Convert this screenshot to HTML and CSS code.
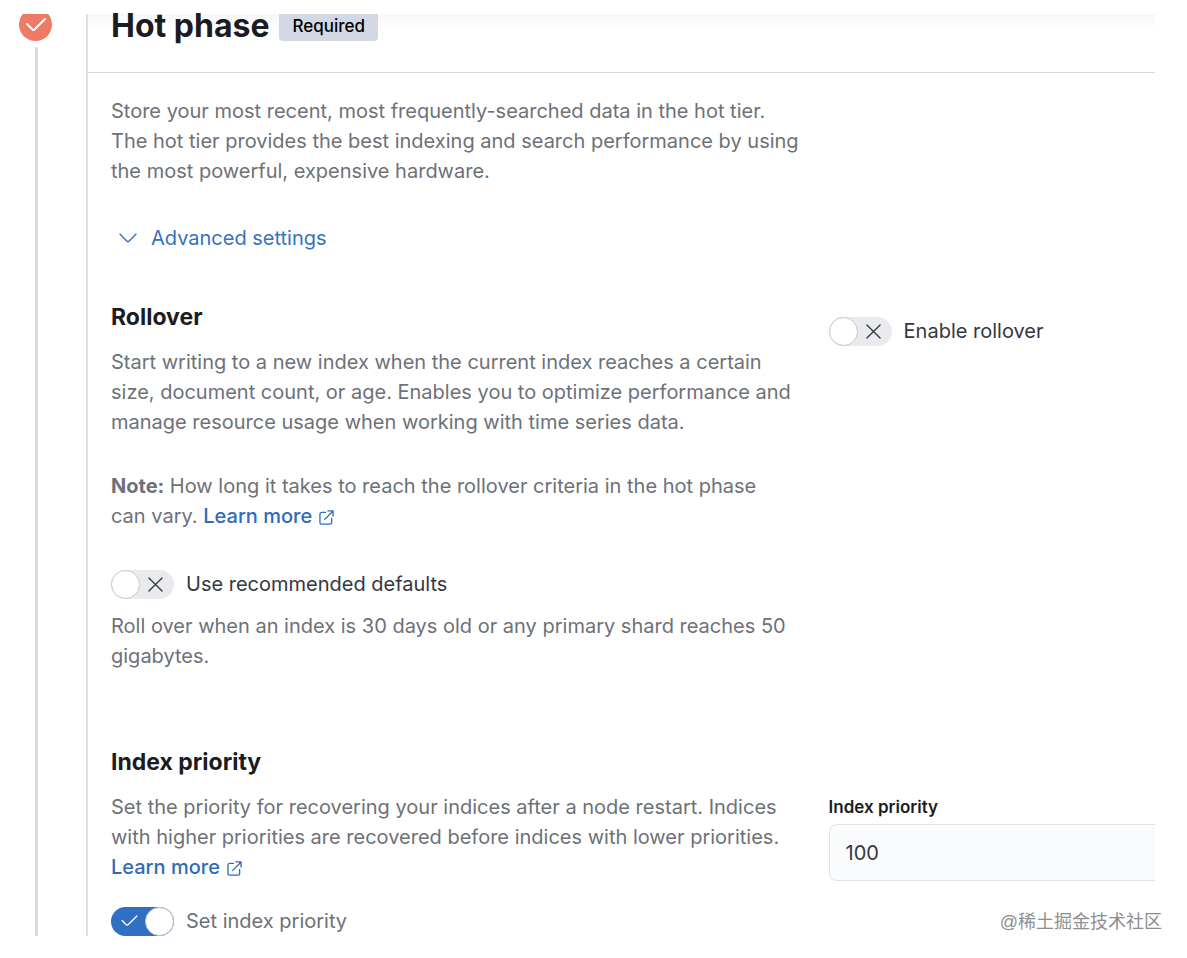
FILE: index.html
```html
<!DOCTYPE html>
<html lang="en">
<head>
    <meta charset="UTF-8">
    <meta name="viewport" content="width=device-width, initial-scale=1.0">
    <title>Hot phase</title>
    <link rel="stylesheet" href="styles.css">
</head>
<body>
    <main class="phase">
        <div class="timeline">
            <div class="timeline-icon">
                <svg width="20" height="14" viewBox="0 0 20 14"><path d="M1 6l5.500 5.500q1 1 2 0L19 1"/></svg>
            </div>
            <div class="timeline-line"></div>
        </div>

        <section class="panel">
            <header class="panel-header">
                <h1>Hot phase</h1>
                <span class="badge">Required</span>
            </header>

            <div class="panel-body">
                <p class="intro">Store your most recent, most frequently-searched data in the hot tier. The hot tier provides the best indexing and search performance by using the most powerful, expensive hardware.</p>

                <button type="button" class="advanced-button">
                    <svg width="18" height="10" viewBox="0 0 18 10"><path d="M1 1l6.800 7q1.200 1.200 2.400 0L17 1"/></svg>
                    Advanced settings
                </button>

                <div class="row">
                    <div class="description">
                        <h2>Rollover</h2>
                        <p>Start writing to a new index when the current index reaches a certain size, document count, or age. Enables you to optimize performance and manage resource usage when working with time series data.</p>
                        <p class="note"><strong>Note:</strong> How long it takes to reach the rollover criteria in the hot phase can vary. <a href="#">Learn more<svg class="external" width="15" height="15" viewBox="0 0 16 16"><path d="M7 2.500H3a2 2 0 0 0-2 2V13a2 2 0 0 0 2 2h8.500a2 2 0 0 0 2-2V9M9.500 1H15v5.500M15 1L6 10"/></svg></a></p>
                        <label class="switch">
                            <input type="checkbox" role="switch">
                            <span class="track">
                                <svg class="cross" width="15" height="15" viewBox="0 0 16 16"><path d="M1 1l14 14M15 1L1 15"/></svg>
                                <span class="thumb"></span>
                            </span>
                            Use recommended defaults
                        </label>
                        <p class="help">Roll over when an index is 30 days old or any primary shard reaches 50 gigabytes.</p>
                    </div>
                    <div class="fields fields-rollover">
                        <label class="switch">
                            <input type="checkbox" role="switch">
                            <span class="track">
                                <svg class="cross" width="15" height="15" viewBox="0 0 16 16"><path d="M1 1l14 14M15 1L1 15"/></svg>
                                <span class="thumb"></span>
                            </span>
                            Enable rollover
                        </label>
                    </div>
                </div>

                <div class="row row-priority">
                    <div class="description">
                        <h2>Index priority</h2>
                        <p>Set the priority for recovering your indices after a node restart. Indices with higher priorities are recovered before indices with lower priorities. <a href="#">Learn more<svg class="external" width="15" height="15" viewBox="0 0 16 16"><path d="M7 2.500H3a2 2 0 0 0-2 2V13a2 2 0 0 0 2 2h8.500a2 2 0 0 0 2-2V9M9.500 1H15v5.500M15 1L6 10"/></svg></a></p>
                        <label class="switch switch-muted">
                            <input type="checkbox" role="switch" checked>
                            <span class="track">
                                <span class="thumb"></span>
                                <svg class="tick" width="17" height="12" viewBox="0 0 18 13"><path d="M1 6l4.500 4.500q1 1 2 0L17 1"/></svg>
                            </span>
                            Set index priority
                        </label>
                    </div>
                    <div class="fields fields-priority">
                        <label class="field-label" for="index-priority">Index priority</label>
                        <input type="text" id="index-priority" class="field-input" value="100" inputmode="numeric">
                    </div>
                </div>
            </div>
        </section>

        <span class="watermark">@稀土掘金技术社区</span>
    </main>
</body>
</html>
```

FILE: styles.css
```css
* {
    box-sizing: border-box;
}
body {
    font-family: Inter, "Liberation Sans", sans-serif;
    font-size: 20px;
    line-height: 30px;
    color: #6d7178;
    background-color: #ffffff;
    margin: 0;
    padding: 14px 32px 22px 19px;
}
h1, h2, p {
    margin: 0;
}
svg {
    fill: none;
    stroke: currentColor;
    stroke-width: 1.4;
    stroke-linecap: round;
    stroke-linejoin: round;
}
.phase {
    position: relative;
    display: flex;
}
.timeline {
    width: 67px;
    flex-shrink: 0;
    display: flex;
    flex-direction: column;
    overflow: hidden;
}
.timeline-icon {
    width: 33px;
    height: 33px;
    margin-top: -6px;
    flex-shrink: 0;
    display: flex;
    align-items: center;
    justify-content: center;
    color: #ffffff;
    background-color: #ee7b64;
    border-radius: 50%;
}
.timeline-icon svg {
    stroke-width: 2;
}
.timeline-line {
    flex: 1;
    width: 3px;
    margin: 6px 0 0 16px;
    background-color: #d8dae6;
}
.panel {
    flex: 1;
    min-width: 0;
    border-left: 2px solid #dfe1e8;
}
.panel-header {
    display: flex;
    align-items: flex-start;
    gap: 10px;
    padding: 0 0 31px 23px;
    border-bottom: 1px solid #d3d7de;
    background-image: linear-gradient(#f7f7f8, #ffffff 16px);
}
h1 {
    font-size: 32px;
    line-height: 24px;
    font-weight: 700;
    color: #1a1c21;
}
.badge {
    padding: 0 13px 3px;
    font-size: 17px;
    line-height: 24px;
    font-weight: 500;
    color: #000000;
    background-color: #d3d9e4;
    border-radius: 0 0 4px 4px;
}
.panel-body {
    padding: 23px 0 0 23px;
}
.intro {
    max-width: 694px;
}
.advanced-button {
    display: flex;
    align-items: center;
    gap: 14px;
    margin: 37px 0 49px;
    padding: 0 8px;
    font: inherit;
    color: #3572c0;
    background: none;
    border: 0;
    cursor: pointer;
}
.row {
    display: grid;
    grid-template-columns: 17fr 8fr;
    gap: 24px;
}
.row-priority {
    margin-top: 76px;
}
.description {
    padding-right: 12px;
}
h2 {
    margin-bottom: 15px;
    font-size: 23px;
    line-height: 30px;
    font-weight: 700;
    color: #1a1c21;
}
.note {
    margin-top: 34px;
}
a {
    font-weight: 500;
    color: #2f6bb8;
    text-decoration: none;
}
a:hover {
    text-decoration: underline;
}
.external {
    margin-left: 7px;
    vertical-align: -2px;
}
.switch {
    position: relative;
    display: flex;
    align-items: center;
    gap: 12px;
    color: #343741;
    cursor: pointer;
}
.description .switch {
    margin-top: 38px;
}
.description .switch-muted {
    margin-top: 24px;
    color: #6d7178;
}
/* The real checkbox lies invisible over the drawn switch */
.switch input {
    position: absolute;
    width: 63px;
    height: 30px;
    margin: 0;
    opacity: 0;
}
.track {
    display: flex;
    align-items: center;
    justify-content: space-between;
    flex-direction: row-reverse;
    width: 63px;
    height: 29px;
    padding-right: 11px;
    color: #343741;
    background-color: #e8eaed;
    border-radius: 15px;
}
.thumb {
    width: 29px;
    height: 29px;
    background-color: #ffffff;
    border: 1px solid #c5c8ce;
    border-radius: 50%;
}
input:checked + .track {
    flex-direction: row-reverse;
    padding: 0 0 0 10px;
    color: #ffffff;
    background-color: #2f6fc4;
}
.help {
    margin-top: 12px;
}
.fields-rollover {
    padding-top: 14px;
}
.fields-priority {
    padding-top: 48px;
}
.field-label {
    display: block;
    margin-bottom: 5px;
    font-size: 17px;
    line-height: 24px;
    font-weight: 600;
    color: #1a1c21;
}
/* The field runs off the right edge of the panel */
.field-input {
    display: block;
    width: 100%;
    height: 57px;
    padding: 0 16px;
    font: inherit;
    color: #343741;
    background-color: #fafbfd;
    border: 1px solid #dfe3e8;
    border-right: 0;
    border-radius: 8px 0 0 8px;
}
.watermark {
    position: absolute;
    right: -7px;
    bottom: 0;
    font-family: "Liberation Sans", "Noto Sans CJK SC", sans-serif;
    font-size: 18px;
    line-height: 28px;
    color: #8c8e92;
}
```
